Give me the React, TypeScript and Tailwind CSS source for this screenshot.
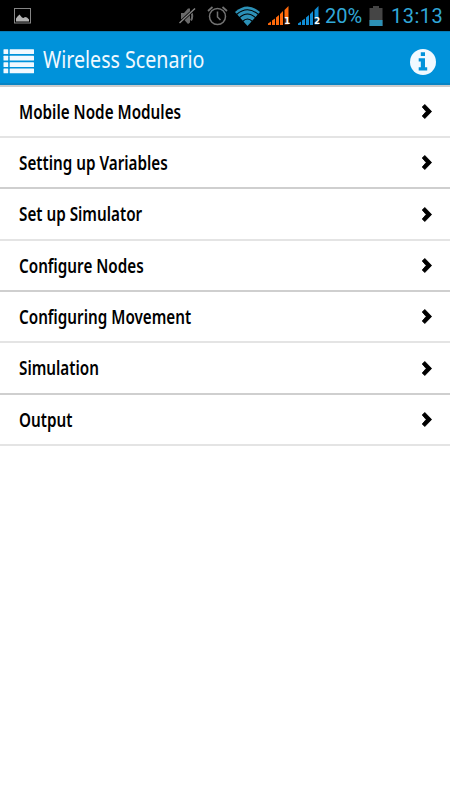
const rows = [
  { label: "Mobile Node Modules", size: "h-[51px] border-[#e4e4e4]" },
  { label: "Setting up Variables", size: "h-[51px] border-[#cfcfcf]" },
  { label: "Set up Simulator", size: "h-[52px] border-[#e4e4e4]" },
  { label: "Configure Nodes", size: "h-[51px] border-[#cfcfcf]" },
  { label: "Configuring Movement", size: "h-[51px] border-[#e4e4e4]" },
  { label: "Simulation", size: "h-[52px] border-[#cfcfcf]" },
  { label: "Output", size: "h-[51px] border-[#e4e4e4]" },
];

function PictureIcon() {
  return (
    <svg className="h-4 w-[17px] shrink-0" viewBox="0 0 17 16">
      <rect x="0.5" y="0.5" width="16" height="14.5" fill="#000" stroke="#858585" />
      <path d="M2 13.5V10.5L3.5 8.5L5.5 6.5L8 9.5L9.5 10L11 9L13 9.5L15 11.5V13.5Z" fill="#b2b2b2" />
    </svg>
  );
}

function MuteIcon() {
  return (
    <svg className="h-[18px] w-[17px] shrink-0" viewBox="0 0 17 18">
      <path d="M2 6H5L9 1.5H11V15.5L9 17L5 12.5H2Z" fill="#6a6a6a" />
      <path d="M12 5Q14.5 9 12 13.5" fill="none" stroke="#6a6a6a" strokeWidth="2" />
      <path d="M0.5 16L16 1.5" stroke="#000" strokeWidth="3" />
      <path d="M0.5 16L16 1.5" stroke="#858585" strokeWidth="1.4" />
    </svg>
  );
}

function AlarmIcon() {
  return (
    <svg className="h-5 w-[21px] shrink-0" viewBox="0 0 21 20" fill="none" stroke="#737373">
      <circle cx="10.5" cy="10.5" r="8" strokeWidth="1.5" />
      <path d="M10.5 5.5V11L13.5 14" strokeWidth="1.5" />
      <path d="M1 5L5.5 1M15.5 1L20 5" strokeWidth="1.7" />
    </svg>
  );
}

function WifiIcon() {
  return (
    <svg className="h-5 w-[25px] shrink-0" viewBox="0 0 25 20">
      <path d="M0 6Q12.5 -5 25 6L12.5 20Z" fill="#2c91b7" />
      <path d="M1.5 8.5Q12.5 -1 23.5 8.5M4 12Q12.5 4 21 12M7.5 15.5Q12.5 10.5 17.5 15.5" fill="none" stroke="#000" strokeWidth="1.1" />
    </svg>
  );
}

function SignalIcon({ sim, color }: { sim: string; color: string }) {
  return (
    <div className="relative h-5 w-[22px] shrink-0">
      <svg className="h-5 w-[22px]" viewBox="0 0 22 20" fill={color}>
        <path d="M0 19V17.5L3 15.5V19ZM4 19V14.5L7 12.5V19ZM8 19V11.5L11 9V19ZM12 19V8L15 5V19ZM16.5 19V4L20.5 0V19Z" />
      </svg>
      <span className="absolute right-0 bottom-0 flex h-[8px] w-[6px] items-center justify-center bg-black/60 font-['DejaVu_Sans',sans-serif] text-[9px] leading-none font-bold text-white">
        {sim}
      </span>
    </div>
  );
}

function BatteryIcon() {
  return (
    <svg className="mr-px h-5 w-[14px] shrink-0" viewBox="0 0 14 20">
      <path d="M4 0H10V2H13.5V20H0.5V2H4Z" fill="#454545" />
      <path d="M0.5 14H13.5V20H0.5Z" fill="#2c91b7" />
    </svg>
  );
}

function StatusBar() {
  return (
    <div className="flex h-[31px] shrink-0 items-center justify-between bg-black pr-[7px] pl-[14px] font-[Roboto,sans-serif] text-xl leading-none text-[#31a8d8]">
      <PictureIcon />
      <div className="flex items-center gap-[7px]">
        <div className="flex items-center gap-[7px]">
          <div className="flex items-center gap-[11px]">
            <MuteIcon />
            <AlarmIcon />
          </div>
          <WifiIcon />
          <div className="ml-px flex items-center gap-2">
            <SignalIcon sim="1" color="#ff6a0b" />
            <SignalIcon sim="2" color="#108cd4" />
          </div>
        </div>
        <span className="-ml-0.5 w-[37px] pt-px whitespace-nowrap">20%</span>
        <BatteryIcon />
        <span className="w-[52px] pt-px tracking-[0.5px] whitespace-nowrap">13:13</span>
      </div>
    </div>
  );
}

function MenuIcon() {
  return (
    <svg className="h-[25px] w-[31px] shrink-0" viewBox="0 0 31 25" fill="#f1f9ff">
      {[0.3, 6.8, 13.2, 19.6].map((y) => (
        <g key={y}>
          <rect x="0.5" y={y} width="4.7" height="4.7" rx="0.5" />
          <rect x="6.7" y={y} width="24.3" height="4.7" rx="0.5" />
        </g>
      ))}
    </svg>
  );
}

function InfoIcon() {
  return (
    <svg className="mt-[2px] h-[26px] w-[26px] shrink-0" viewBox="0 0 26 26">
      <circle cx="13" cy="13" r="13" fill="#f1f9ff" />
      <path d="M10.8 3.3H15V7H10.8ZM8.7 9.3H15V18.3H17.2V21.6H8.7V18.3H10.8V12.6H8.7Z" fill="#0092da" />
    </svg>
  );
}

function ChevronIcon() {
  return (
    <svg className="h-[15px] w-[10px] shrink-0" viewBox="0 0 10 15">
      <path d="M0.3 3L2.8 0.5L9.6 7.5L2.8 14.5L0.3 12L4.2 7.5Z" fill="#000" stroke="#000" strokeWidth="0.9" strokeLinejoin="round" />
    </svg>
  );
}

export default function App() {
  return (
    <div className="flex h-[800px] w-[450px] flex-col overflow-hidden bg-white font-['Noto_Sans',sans-serif]">
      <StatusBar />
      <header className="flex h-[54px] shrink-0 items-center justify-between border-t border-b-2 border-t-[#087bb6] border-b-[#0784c4] bg-[#0092da] pt-[8px] pr-[14px] pb-[1px] pl-[3px]">
        <div className="flex items-center gap-[9px]">
          <MenuIcon />
          <h1 className="mb-[4px] origin-left scale-x-[0.817] text-2xl leading-[30px] whitespace-nowrap text-[#f1f9ff]">
            Wireless Scenario
          </h1>
        </div>
        <InfoIcon />
      </header>
      <ul className="border-t-2 border-[#cbcbcb]">
        {rows.map((row) => (
          <li key={row.label} className={`flex items-center justify-between border-b-2 pr-[18px] pl-[19px] ${row.size}`}>
            <span className="origin-left scale-x-[0.762] text-xl leading-7 font-semibold whitespace-nowrap text-black">
              {row.label}
            </span>
            <ChevronIcon />
          </li>
        ))}
      </ul>
    </div>
  );
}
